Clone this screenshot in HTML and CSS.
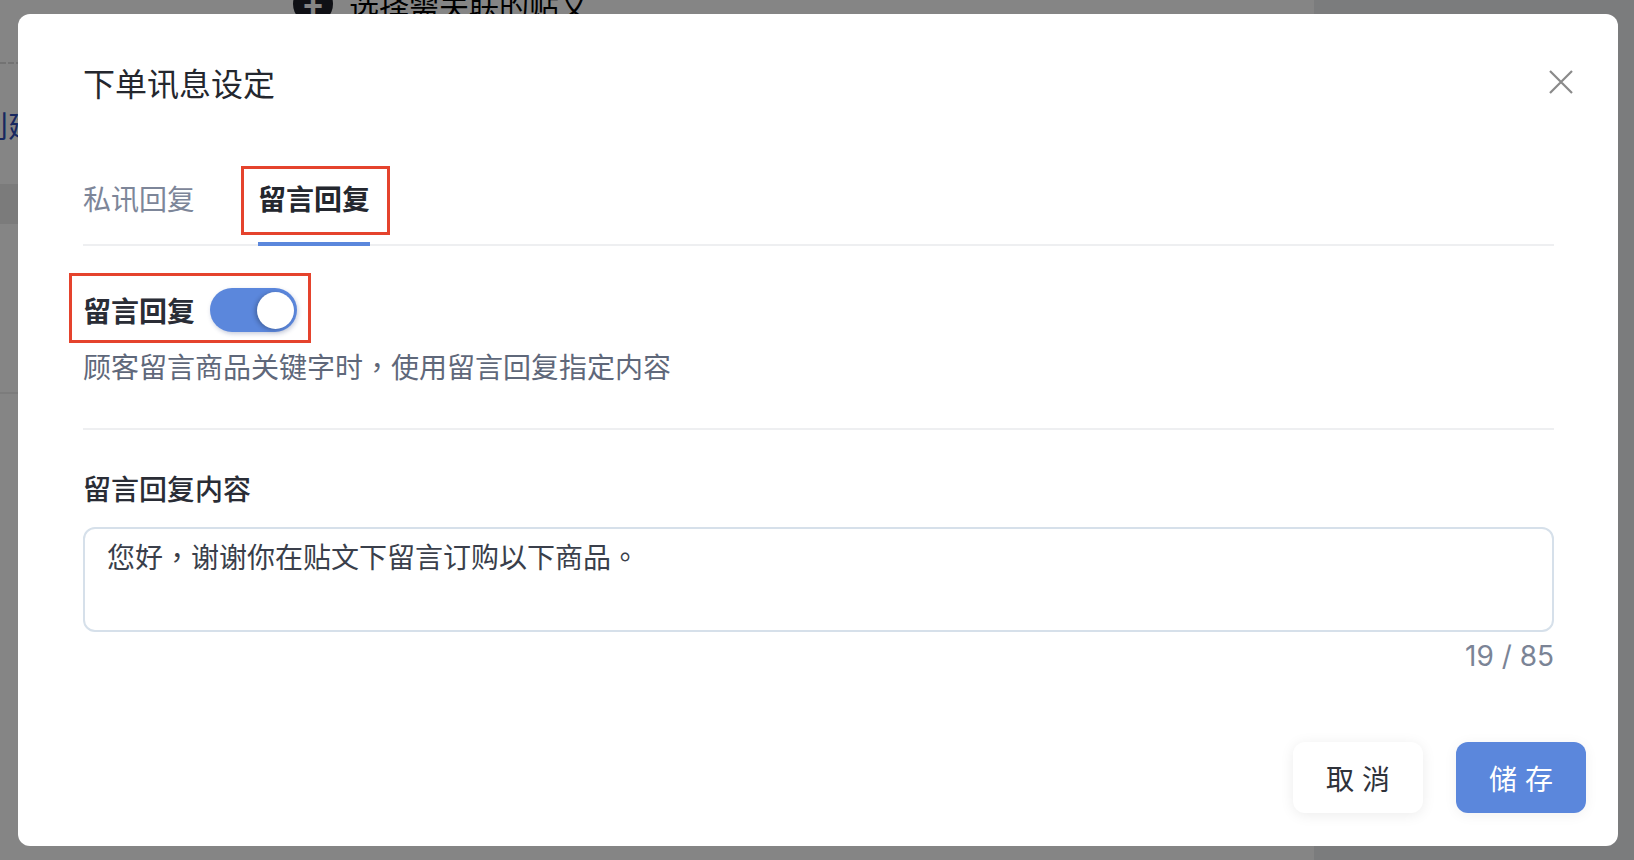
FILE: index.html
```html
<!DOCTYPE html>
<html lang="zh-TW">
<head>
    <meta charset="UTF-8">
    <meta name="viewport" content="width=device-width, initial-scale=1.0">
    <title>下单讯息设定</title>
    <link rel="stylesheet" href="styles.css">
</head>
<body>
    <!-- page behind the dialog -->
    <div class="page">
        <div class="page-main">
            <div class="page-top">
                <span class="page-plus">+</span>
                <span class="page-top-text">选择需关联的贴文</span>
            </div>
            <div class="page-dash"></div>
            <a class="page-link">创建</a>
            <div class="page-band"></div>
            <div class="page-rule"></div>
        </div>
        <div class="page-aside"></div>
    </div>

    <div class="mask">
        <div class="modal">
            <div class="modal-header">
                <h2 class="modal-title">下单讯息设定</h2>
                <button class="modal-close" aria-label="关闭">
                    <svg viewBox="0 0 24 24" width="24" height="24">
                        <path d="M1 1 L23 23 M23 1 L1 23" stroke="#8a8a8a" stroke-width="2.2" fill="none" />
                    </svg>
                </button>
            </div>

            <div class="tabs">
                <div class="tab">私讯回复</div>
                <div class="tab active marked marked-tab">留言回复</div>
            </div>

            <div class="switch-row marked marked-switch">
                <span class="switch-label">留言回复</span>
                <span class="switch on"><span class="switch-knob"></span></span>
            </div>
            <p class="hint">顾客留言商品关键字时，使用留言回复指定内容</p>

            <div class="divider"></div>

            <div class="field-label">留言回复内容</div>
            <textarea class="reply-input">您好，谢谢你在贴文下留言订购以下商品。</textarea>
            <div class="counter">19 / 85</div>

            <div class="modal-footer">
                <button class="btn btn-cancel">取 消</button>
                <button class="btn btn-save">储 存</button>
            </div>
        </div>
    </div>
</body>
</html>
```

FILE: styles.css
```css
* {
    box-sizing: border-box;
}
html, body {
    margin: 0;
    height: 100%;
    overflow: hidden;
}
body {
    font-family: Inter, "Noto Sans CJK TC", sans-serif;
    color: #2c2f36;
}

/* background page */
.page {
    display: flex;
    height: 100vh;
}
.page-main {
    flex: 1;
    background: #fff;
    display: flex;
    flex-direction: column;
}
.page-aside {
    width: 320px;
    background: #ecedf0;
}
.page-top {
    display: flex;
    align-items: center;
    gap: 16px;
    margin-top: -16px;
    padding-left: 293px;
    height: 40px;
}
.page-plus {
    width: 40px;
    height: 40px;
    border-radius: 50%;
    background: #1e2029;
    color: #fff;
    font-size: 34px;
    line-height: 40px;
    text-align: center;
    font-weight: 700;
}
.page-top-text {
    font-size: 30px;
    color: #000;
}
.page-dash {
    margin-top: 38px;
    border-top: 2px dashed #ddd;
    width: 30px;
}
.page-link {
    margin-top: 38px;
    margin-left: -22px;
    font-size: 30px;
    color: #2f4db8;
}
.page-band {
    margin-top: 38px;
    height: 40px;
    background: #ececec;
}
.page-rule {
    margin-top: 168px;
    border-top: 2px solid #eee;
}

/* dialog */
.mask {
    position: fixed;
    inset: 0;
    background: rgba(0, 0, 0, 0.48);
    padding: 14px 16px 14px 18px;
}
.modal {
    height: 100%;
    background: #fff;
    border-radius: 12px;
    padding: 48px 64px 0 65px;
    display: flex;
    flex-direction: column;
}
.modal-header {
    display: flex;
    align-items: center;
    justify-content: space-between;
}
.modal-title {
    margin: 0;
    font-size: 32px;
    line-height: 45px;
    font-weight: 400;
    color: #24272e;
}
.modal-close {
    border: none;
    background: none;
    padding: 0;
    margin: -6px -19px 0 0;
    width: 24px;
    height: 24px;
    cursor: pointer;
}
.modal-close svg {
    display: block;
}

/* tabs */
.tabs {
    margin-top: 73px;
    display: flex;
    gap: 63px;
    border-bottom: 2px solid #eeeff1;
}
.tab {
    font-size: 28px;
    line-height: 40px;
    padding-bottom: 22px;
    border-bottom: 4px solid transparent;
    margin-bottom: -2px;
    color: #7d8699;
}
.tab.active {
    color: #24272e;
    font-weight: 700;
    border-bottom-color: #5b87dc;
}

/* red annotation boxes */
.marked {
    position: relative;
}
.marked::after {
    content: "";
    position: absolute;
    border: 3px solid #e5432d;
    pointer-events: none;
}
.marked-tab::after {
    top: -14px;
    left: -17px;
    right: -20px;
    height: 63px;
}
.marked-switch::after {
    top: -15px;
    left: -14px;
    right: -14px;
    bottom: -11px;
}

/* switch */
.switch-row {
    margin-top: 42px;
    align-self: flex-start;
    display: flex;
    align-items: center;
    gap: 15px;
    height: 44px;
}
.switch-label {
    font-size: 28px;
    font-weight: 600;
    color: #2a2d36;
}
.switch {
    width: 87px;
    height: 44px;
    border-radius: 22px;
    background: #5b87dc;
    display: flex;
    align-items: center;
    justify-content: flex-end;
    padding: 0 3px;
    box-shadow: 1px 2px 4px rgba(40, 60, 120, 0.25);
}
.switch-knob {
    width: 37px;
    height: 37px;
    border-radius: 50%;
    background: #fff;
    box-shadow: -2px 1px 4px rgba(0, 0, 0, 0.25);
}
.hint {
    margin: 16px 0 0;
    font-size: 28px;
    line-height: 40px;
    color: #5f687a;
}
.divider {
    margin-top: 40px;
    border-top: 2px solid #eeeff1;
}

/* reply content */
.field-label {
    margin-top: 40px;
    font-size: 28px;
    line-height: 40px;
    font-weight: 500;
    color: #2a2d36;
}
.reply-input {
    margin-top: 17px;
    height: 105px;
    width: 100%;
    resize: none;
    border: 2px solid #d6e0ea;
    border-radius: 12px;
    padding: 9px 22px;
    font-family: Inter, "Noto Sans CJK TC", sans-serif;
    font-size: 28px;
    line-height: 40px;
    color: #3a3f4b;
    outline: none;
}
.counter {
    margin-top: 4px;
    text-align: right;
    font-size: 28px;
    line-height: 40px;
    color: #7b8496;
}

/* footer */
.modal-footer {
    margin: auto -32px 33px 0;
    display: flex;
    justify-content: flex-end;
    gap: 33px;
}
.btn {
    width: 130px;
    height: 71px;
    border: none;
    border-radius: 12px;
    font-family: Inter, "Noto Sans CJK TC", sans-serif;
    font-size: 28px;
    cursor: pointer;
}
.btn-cancel {
    background: #fff;
    color: #2f323a;
    box-shadow: 0 2px 14px rgba(0, 0, 0, 0.08);
}
.btn-save {
    background: #5b87dc;
    color: #fff;
    box-shadow: 0 2px 14px rgba(0, 0, 0, 0.06);
}
```
